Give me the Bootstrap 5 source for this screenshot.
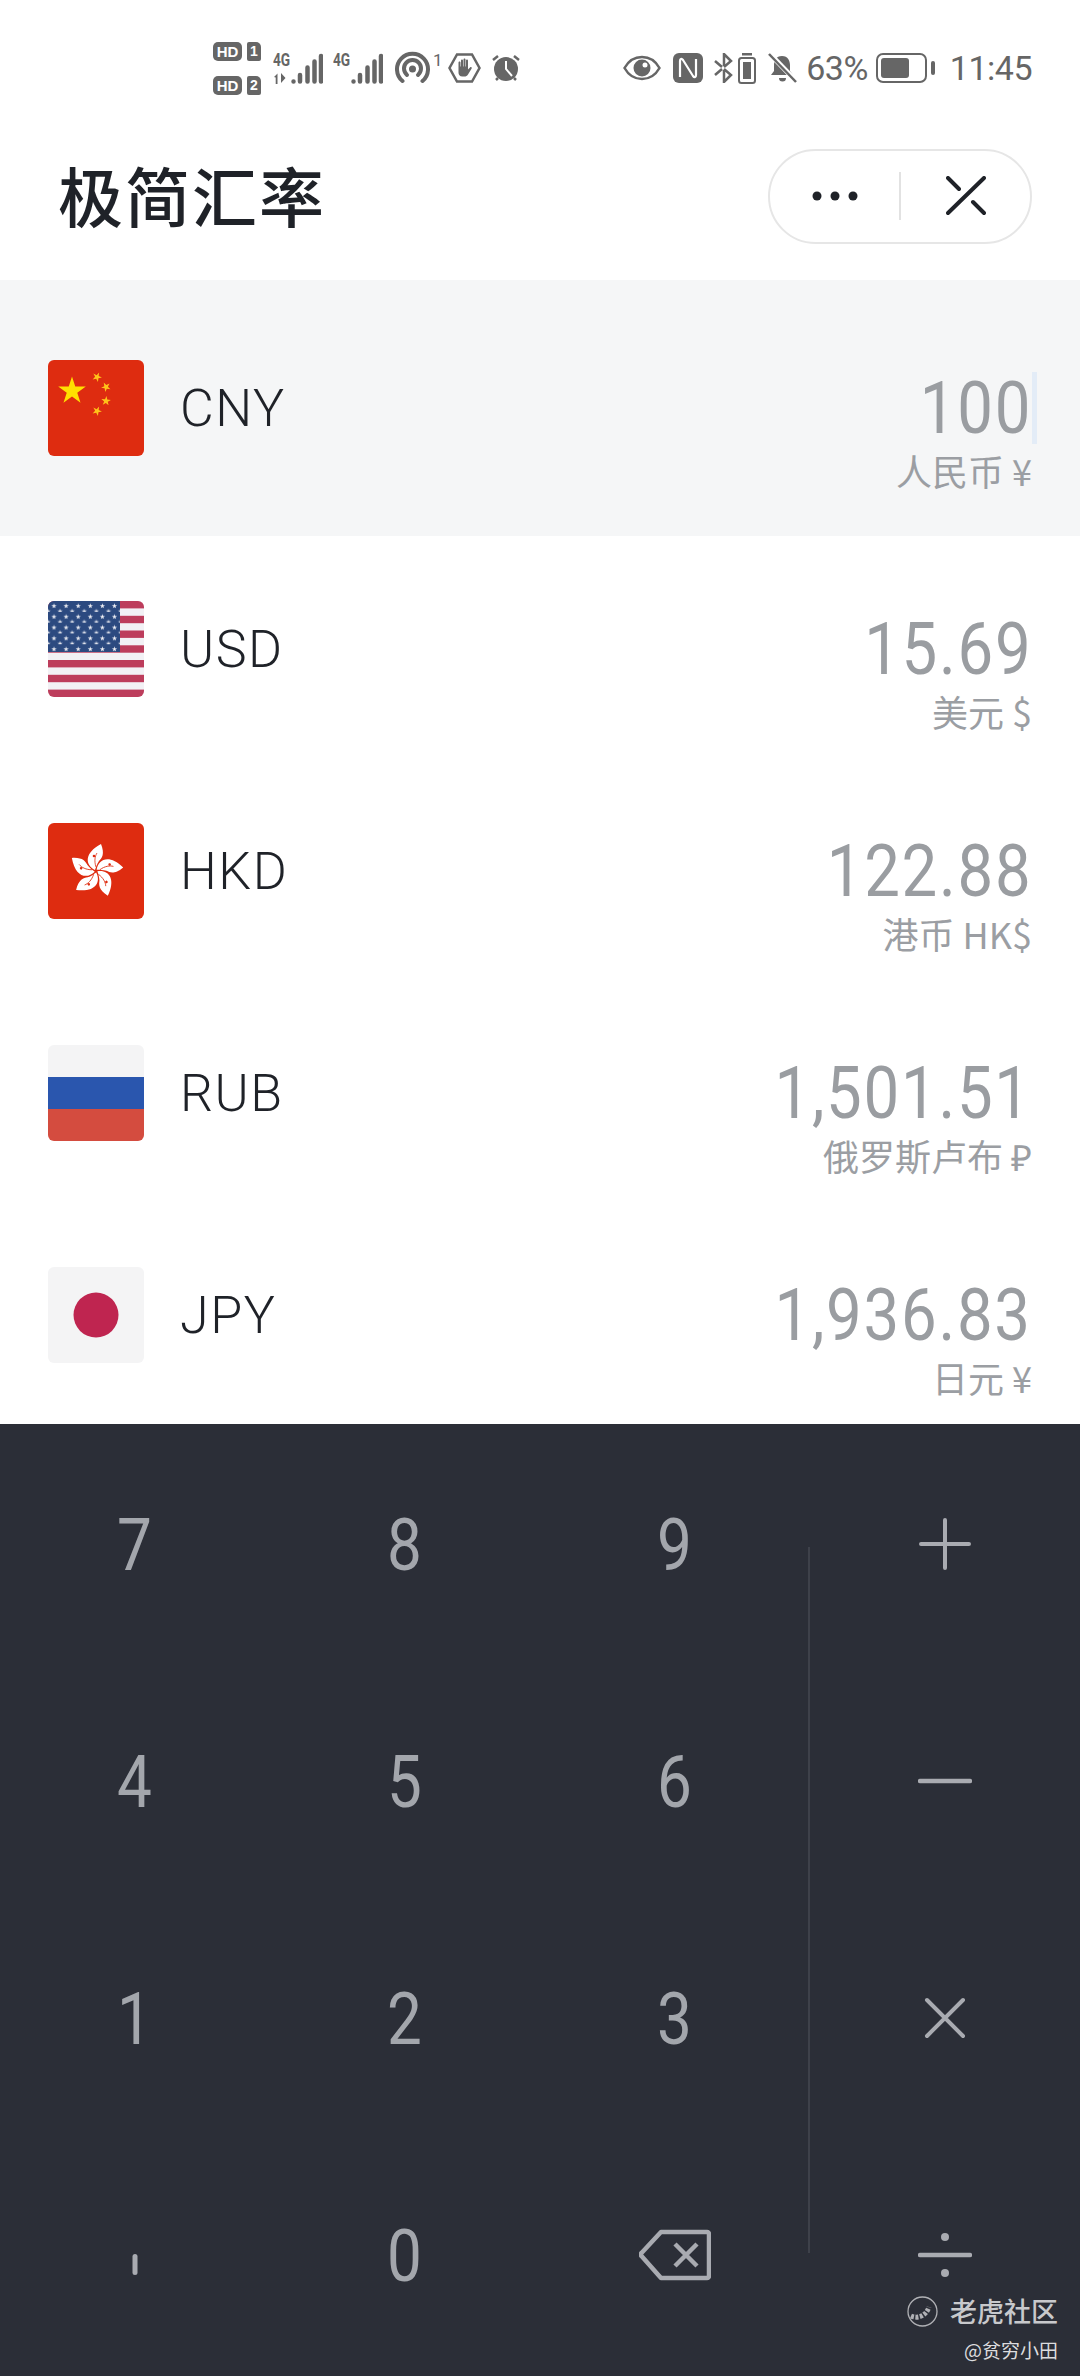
<!DOCTYPE html>
<html lang="zh-CN">
<head>
<meta charset="UTF-8">
<meta name="viewport" content="width=device-width, initial-scale=1.0">
<title>极简汇率</title>
<link href="https://cdn.jsdelivr.net/npm/bootstrap@5.3.0/dist/css/bootstrap.min.css" rel="stylesheet">
<style>
    html, body { margin: 0; background: #fff; }
    body {
        width: 1080px;
        height: 2376px;
        overflow: hidden;
        font-family: "Roboto", "Noto Sans CJK SC", sans-serif;
        position: relative;
    }
    svg { display: block; flex-shrink: 0; }

    /* status bar */
    .status-bar {
        height: 112px;
        padding: 24px 48px 0 213px;
        color: #666;
        font-size: 34px;
        line-height: 1;
    }
    .status-left > :nth-child(2) { margin-left: 12px; }
    .status-left > :nth-child(3) { margin-left: 10px; }
    .status-left > :nth-child(4) { margin-left: 12px; margin-top: -4px; }
    .status-left > :nth-child(5) { margin-left: 5px; }
    .status-left > :nth-child(6) { margin-left: 11px; }
    .status-right > :nth-child(2) { margin-left: 12px; }
    .status-right > :nth-child(3) { margin-left: 11px; }
    .status-right > :nth-child(4) { margin-left: 5px; }
    .status-right > :nth-child(5) { margin-left: 12px; }
    .status-right > :nth-child(6) { margin-left: 9px; }
    .status-right > :nth-child(7) { margin-left: 8px; }
    .status-right > :nth-child(8) { margin-left: 14px; }
    .status-text { font-weight: 400; letter-spacing: -.5px; }
    .hd-stack { width: 48px; gap: 15px; }
    .hd-line { gap: 5px; height: 19px; }
    .hd-tag, .sim-tag {
        background: #666;
        color: #fff;
        font-family: "Liberation Sans", sans-serif;
        font-weight: 700;
        font-size: 15px;
        line-height: 19px;
        text-align: center;
    }
    .hd-tag { width: 29px; border-radius: 5px; }
    .sim-tag { width: 14px; border-radius: 2px; border-top-right-radius: 5px; font-size: 14px; }
    .net-tag { width: 18px; height: 31px; }
    .net-text {
        font-weight: 700;
        font-size: 19px;
        line-height: 14px;
        transform: scaleX(.72);
        transform-origin: left;
        color: #666;
        margin-bottom: 6px;
    }

    /* title bar */
    .title-bar {
        height: 168px;
        padding: 0 48px 0 58px;
    }
    .page-title {
        font-family: "Noto Sans CJK SC", sans-serif;
        font-size: 65px;
        font-weight: 500;
        letter-spacing: 2px;
        color: #1f2228;
        margin: 0 0 4px;
        line-height: 1;
    }
    .capsule {
        width: 264px;
        height: 95px;
        border: 2px solid #e6e6e6;
        border-radius: 48px;
    }
    .capsule-btn { flex: 1 1 0; }
    .capsule-sep { width: 2px; height: 48px; background: #e2e2e2; }

    /* currency rows */
    .rate-list { height: 1144px; overflow: hidden; }
    .rate-row {
        height: 222px;
        padding: 0 48px;
    }
    .rate-row.is-active {
        height: 256px;
        background: #f5f6f7;
        margin-bottom: 2px;
    }
    .flag-box {
        width: 96px;
        height: 96px;
        border-radius: 6px;
        overflow: hidden;
        flex-shrink: 0;
    }
    .code-text {
        margin: 1px 0 0 36px;
        font-size: 52px;
        font-weight: 300;
        color: #1f2228;
        letter-spacing: 1.5px;
        line-height: 1;
    }
    .rate-value { padding-top: 52px; text-align: right; }
    .rate-num {
        font-size: 73px;
        line-height: 72px;
        letter-spacing: 2px;
        color: #9a9da1;
    }
    .num-glyphs {
        display: inline-block;
        transform: scaleX(.87);
        transform-origin: right;
    }
    .rate-name {
        font-family: "Noto Sans CJK SC", sans-serif;
        font-size: 36px;
        line-height: 52px;
        color: #9b9ea3;
    }
    .text-cursor {
        display: inline-block;
        width: 5px;
        height: 72px;
        margin-right: -5px;
        vertical-align: top;
        background: #e3ecf7;
    }

    /* keypad */
    .keypad {
        height: 952px;
        padding-top: 1px;
        background: #2b2e37;
        position: relative;
    }
    .key-col {
        height: 237px;
        color: #a3a6ac;
        font-size: 73px;
        line-height: 1;
    }
    .key-digit {
        display: inline-block;
        padding-top: 4px;
        transform: scaleX(.85);
    }
    .comma-mark { margin-top: 20px; }
    .keypad-line {
        position: absolute;
        left: 808px;
        top: 123px;
        width: 2px;
        height: 706px;
        background: #3e414a;
    }
    .watermark {
        position: absolute;
        right: 22px;
        bottom: 13px;
        text-align: right;
        font-family: "Noto Sans CJK SC", sans-serif;
    }
    .wm-main { font-size: 27px; line-height: 36px; font-weight: 500; color: #c8c9cc; }
    .wm-logo { margin-right: 12px; }
    .wm-sub { font-size: 19px; line-height: 26px; margin-top: 8px; color: #dcdcde; }
</style>
</head>
<body>
    <!-- status bar -->
    <div class="status-bar d-flex justify-content-between align-items-center">
        <div class="status-left d-flex align-items-center">
            <div class="hd-stack d-flex flex-column">
                <div class="hd-line d-flex"><span class="hd-tag">HD</span><span class="sim-tag">1</span></div>
                <div class="hd-line d-flex"><span class="hd-tag">HD</span><span class="sim-tag">2</span></div>
            </div>
            <div class="d-flex align-items-start">
                <div class="net-tag">
                    <div class="net-text">4G</div>
                    <svg width="16" height="11" viewBox="0 0 16 11"><path d="M1 4l3.500-3.500V11H2.700V4.500zM8 0l4.500 5L8 10z" fill="#666"/></svg>
                </div>
                <svg width="32" height="31" viewBox="0 0 32 31">
                    <path d="M2.500 28.500v0M9 22v6.500M16.500 14.500v14M23.500 8.500v20M30 3v25.500" fill="none" stroke="#666" stroke-width="4.500" stroke-linecap="round"/>
                </svg>
            </div>
            <div class="d-flex align-items-start">
                <div class="net-tag">
                    <div class="net-text">4G</div>
                </div>
                <svg width="32" height="31" viewBox="0 0 32 31">
                    <path d="M2.500 28.500v0M9 22v6.500M16.500 14.500v14M23.500 8.500v20M30 3v25.500" fill="none" stroke="#666" stroke-width="4.500" stroke-linecap="round"/>
                </svg>
            </div>
            <svg width="48" height="36" viewBox="0 -4 48 36">
                <g fill="none" stroke="#666" stroke-width="4" stroke-linecap="round">
                    <path d="M7.500 29A15.500 15.500 0 1 1 27.500 29"/>
                    <path d="M12 23A8.500 8.500 0 1 1 23 23"/>
                </g>
                <circle cx="17.500" cy="17" r="3.500" fill="#666"/>
                <text x="38" y="14" font-family="Roboto" font-size="17" fill="#666">1</text>
            </svg>
            <svg width="33" height="30" viewBox="0 0 33 30">
                <path d="M9 1.500h15l7.500 13.500-7.500 13.500h-15l-7.500-13.500z" fill="none" stroke="#666" stroke-width="2.500"/>
                <path d="M10.500 9.500c0-1.500 2-1.500 2 0v4h.500v-6c0-1.500 2-1.500 2 0v6h.500v-7c0-1.500 2-1.500 2 0v7h.500v-6c0-1.500 2-1.500 2 0v9l2-2c1-1 2.500 0 1.500 1.200l-3.500 5.800c-1 1.500-2 2-3.500 2h-2c-3 0-4-2-4-4z" fill="#666"/>
            </svg>
            <svg width="28" height="30" viewBox="0 0 28 30">
                <circle cx="14" cy="16" r="12" fill="#666"/>
                <path d="M14 8v8l6 7" fill="none" stroke="#fff" stroke-width="2"/>
                <path d="M1 7l5-4M27 7l-5-4M4 27l2-2M24 27l-2-2" stroke="#666" stroke-width="2.500" fill="none"/>
            </svg>
        </div>
        <div class="status-right d-flex align-items-center">
            <svg width="38" height="26" viewBox="0 0 38 26">
                <path d="M1.500 13C6 5 12 2 19 2s13 3 17.500 11C32 21 26 24 19 24S6 21 1.500 13z" fill="none" stroke="#666" stroke-width="2.500"/>
                <circle cx="19" cy="13" r="8.500" fill="#666"/>
                <circle cx="22" cy="10" r="2.500" fill="#fff"/>
            </svg>
            <svg width="30" height="30" viewBox="0 0 30 30">
                <rect width="30" height="30" rx="6" fill="#666"/>
                <path d="M7 24V8c0-2 1.500-3 3-1l10 16c1.500 2 3 1 3-1V6" fill="none" stroke="#fff" stroke-width="2.200"/>
            </svg>
            <svg width="19" height="30" viewBox="0 0 19 30">
                <path d="M1 8l7 6M10 16l7 6-7 7V17M10 13V1l7 7-7 6M8 16l-7 6" fill="none" stroke="#666" stroke-width="2.500"/>
            </svg>
            <svg width="18" height="31" viewBox="0 0 18 31">
                <rect x="4" y="0" width="10" height="2.500" fill="#666"/>
                <rect x="1" y="5" width="16" height="25" rx="2.500" fill="none" stroke="#666" stroke-width="2"/>
                <rect x="5" y="9" width="8" height="17" fill="#666"/>
            </svg>
            <svg width="29" height="30" viewBox="0 0 29 30">
                <path d="M14 3c-6 0-8 5-8 9v6l-3 4h22l-3-4v-6c0-4-2-9-8-9z" fill="#666"/>
                <path d="M11 25a3.500 3.500 0 0 0 7 0z" fill="#666"/>
                <path d="M2 1l26 27" stroke="#fff" stroke-width="5"/>
                <path d="M1 1l27 28" stroke="#666" stroke-width="2.500"/>
            </svg>
            <span class="status-text">63%</span>
            <svg width="60" height="30" viewBox="0 0 60 30">
                <rect x="1" y="1" width="49" height="28" rx="6" fill="none" stroke="#666" stroke-width="2"/>
                <rect x="5" y="5" width="28" height="20" rx="3" fill="#666"/>
                <rect x="55" y="8" width="4" height="14" rx="2" fill="#666"/>
            </svg>
            <span class="status-text">11:45</span>
        </div>
    </div>

    <!-- title bar -->
    <div class="title-bar d-flex justify-content-between align-items-center">
        <h1 class="page-title">极简汇率</h1>
        <div class="capsule d-flex align-items-center">
            <div class="capsule-btn d-flex justify-content-center">
                <svg width="46" height="12" viewBox="0 0 46 12">
                    <circle cx="5" cy="6" r="4.500" fill="#1f2228"/><circle cx="23" cy="6" r="4.500" fill="#1f2228"/><circle cx="41" cy="6" r="4.500" fill="#1f2228"/>
                </svg>
            </div>
            <div class="capsule-sep"></div>
            <div class="capsule-btn d-flex justify-content-center">
                <svg width="40" height="40" viewBox="0 0 40 40">
                    <path d="M2 37L38 2M2 2l11 11M27 26l11 11" fill="none" stroke="#1f2228" stroke-width="4" stroke-linecap="round"/>
                </svg>
            </div>
        </div>
    </div>

    <!-- currency list -->
    <div class="rate-list">
        <div class="rate-row is-active d-flex align-items-center">
            <div class="flag-box">
                <svg width="96" height="96" viewBox="0 0 96 96">
                    <defs><polygon id="star5" points="0,-1 .2245,-.309 .951,-.309 .363,.118 .588,.809 0,.382 -.588,.809 -.363,.118 -.951,-.309 -.2245,-.309"/></defs>
                    <rect width="96" height="96" fill="#de2c10"/>
                    <use href="#star5" transform="translate(24 31) scale(14.500)" fill="#ffe000"/>
                    <use href="#star5" transform="translate(49 17) rotate(25) scale(5)" fill="#ffc21a"/>
                    <use href="#star5" transform="translate(58 27) rotate(45) scale(5)" fill="#ffc21a"/>
                    <use href="#star5" transform="translate(58 41) rotate(5) scale(5)" fill="#ffc21a"/>
                    <use href="#star5" transform="translate(49 51) rotate(25) scale(5)" fill="#ffc21a"/>
                </svg>
            </div>
            <div class="code-text">CNY</div>
            <div class="rate-value ms-auto">
                <div class="rate-num"><span class="num-glyphs">100</span><span class="text-cursor"></span></div>
                <div class="rate-name">人民币 ¥</div>
            </div>
        </div>

        <div class="rate-row d-flex align-items-center">
            <div class="flag-box">
                <svg width="96" height="96" viewBox="0 0 96 96">
                    <defs>
                        <pattern id="usStars" x="0" y="0" width="12.100" height="10.800" patternUnits="userSpaceOnUse">
                            <use href="#star5" transform="translate(6 5) scale(2.700)" fill="#f2f2f6"/>
                            <use href="#star5" transform="translate(12.100 10.400) scale(2.700)" fill="#f2f2f6"/>
                            <use href="#star5" transform="translate(0 10.400) scale(2.700)" fill="#f2f2f6"/>
                        </pattern>
                    </defs>
                    <rect width="96" height="96" fill="#f2f1f5"/>
                    <g fill="#bd3d5c">
                        <rect y="0" width="96" height="7.400"/><rect y="14.800" width="96" height="7.400"/>
                        <rect y="29.500" width="96" height="7.400"/><rect y="44.300" width="96" height="7.400"/>
                        <rect y="59" width="96" height="7.400"/><rect y="73.800" width="96" height="7.400"/>
                        <rect y="88.600" width="96" height="7.400"/>
                    </g>
                    <rect width="72" height="51" fill="#2c4a80"/>
                    <rect width="72" height="51" fill="url(#usStars)"/>
                </svg>
            </div>
            <div class="code-text">USD</div>
            <div class="rate-value ms-auto">
                <div class="rate-num"><span class="num-glyphs">15.69</span></div>
                <div class="rate-name">美元 $</div>
            </div>
        </div>

        <div class="rate-row d-flex align-items-center">
            <div class="flag-box">
                <svg width="96" height="96" viewBox="0 0 96 96">
                    <defs>
                        <g id="hkPetal">
                            <path d="M47 47C37 42 36 30 53 21C57 31 54 35 51 38C49 41 48 44 47 47Z" fill="#fff"/>
                            <path d="M48 44C46 38 47 33 49 30" fill="none" stroke="#de2c10" stroke-width=".8"/>
                            <circle cx="46" cy="33" r="1.300" fill="#de2c10"/>
                        </g>
                    </defs>
                    <rect width="96" height="96" fill="#de2c10"/>
                    <use href="#hkPetal"/>
                    <use href="#hkPetal" transform="rotate(72 48 48)"/>
                    <use href="#hkPetal" transform="rotate(144 48 48)"/>
                    <use href="#hkPetal" transform="rotate(216 48 48)"/>
                    <use href="#hkPetal" transform="rotate(288 48 48)"/>
                </svg>
            </div>
            <div class="code-text">HKD</div>
            <div class="rate-value ms-auto">
                <div class="rate-num"><span class="num-glyphs">122.88</span></div>
                <div class="rate-name">港币 HK$</div>
            </div>
        </div>

        <div class="rate-row d-flex align-items-center">
            <div class="flag-box">
                <svg width="96" height="96" viewBox="0 0 96 96">
                    <rect width="96" height="32" fill="#f4f4f5"/>
                    <rect y="32" width="96" height="32" fill="#2a56ae"/>
                    <rect y="64" width="96" height="32" fill="#d44c3f"/>
                </svg>
            </div>
            <div class="code-text">RUB</div>
            <div class="rate-value ms-auto">
                <div class="rate-num"><span class="num-glyphs">1,501.51</span></div>
                <div class="rate-name">俄罗斯卢布 ₽</div>
            </div>
        </div>

        <div class="rate-row d-flex align-items-center">
            <div class="flag-box">
                <svg width="96" height="96" viewBox="0 0 96 96">
                    <rect width="96" height="96" fill="#f4f4f5"/>
                    <circle cx="48" cy="48" r="22.500" fill="#bf2550"/>
                </svg>
            </div>
            <div class="code-text">JPY</div>
            <div class="rate-value ms-auto">
                <div class="rate-num"><span class="num-glyphs">1,936.83</span></div>
                <div class="rate-name">日元 ¥</div>
            </div>
        </div>
    </div>

    <!-- keypad -->
    <div class="keypad">
        <div class="row g-0">
            <div class="col-3 key-col d-flex align-items-center justify-content-center"><span class="key-digit">7</span></div>
            <div class="col-3 key-col d-flex align-items-center justify-content-center"><span class="key-digit">8</span></div>
            <div class="col-3 key-col d-flex align-items-center justify-content-center"><span class="key-digit">9</span></div>
            <div class="col-3 key-col d-flex align-items-center justify-content-center">
                <svg width="52" height="52" viewBox="0 0 52 52"><path d="M26 2v48M2 26h48" stroke="#a9abb1" stroke-width="4" stroke-linecap="round"/></svg>
            </div>
            <div class="col-3 key-col d-flex align-items-center justify-content-center"><span class="key-digit">4</span></div>
            <div class="col-3 key-col d-flex align-items-center justify-content-center"><span class="key-digit">5</span></div>
            <div class="col-3 key-col d-flex align-items-center justify-content-center"><span class="key-digit">6</span></div>
            <div class="col-3 key-col d-flex align-items-center justify-content-center">
                <svg width="54" height="6" viewBox="0 0 54 6"><path d="M2 3h50" stroke="#a9abb1" stroke-width="4.500" stroke-linecap="round"/></svg>
            </div>
            <div class="col-3 key-col d-flex align-items-center justify-content-center"><span class="key-digit">1</span></div>
            <div class="col-3 key-col d-flex align-items-center justify-content-center"><span class="key-digit">2</span></div>
            <div class="col-3 key-col d-flex align-items-center justify-content-center"><span class="key-digit">3</span></div>
            <div class="col-3 key-col d-flex align-items-center justify-content-center">
                <svg width="44" height="44" viewBox="0 0 44 44"><path d="M4 4l36 36M40 4L4 40" stroke="#a9abb1" stroke-width="4" stroke-linecap="round"/></svg>
            </div>
            <div class="col-3 key-col d-flex align-items-center justify-content-center">
                <svg class="comma-mark" width="6" height="21" viewBox="0 0 6 21"><path d="M3 2.500v16" stroke="#a9abb1" stroke-width="5" stroke-linecap="round"/></svg>
            </div>
            <div class="col-3 key-col d-flex align-items-center justify-content-center"><span class="key-digit">0</span></div>
            <div class="col-3 key-col d-flex align-items-center justify-content-center">
                <svg width="72" height="52" viewBox="0 0 72 52"><path d="M22 3h46a2 2 0 0 1 2 2v42a2 2 0 0 1-2 2H22L2.500 27a2 2 0 0 1 0-3z" fill="none" stroke="#a9abb1" stroke-width="4.500" stroke-linejoin="round"/><path d="M36 15l22 22M58 15L36 37" stroke="#a9abb1" stroke-width="4.500"/></svg>
            </div>
            <div class="col-3 key-col d-flex align-items-center justify-content-center">
                <svg width="54" height="46" viewBox="0 0 54 46"><path d="M2 23h50" stroke="#a9abb1" stroke-width="4.500" stroke-linecap="round"/><circle cx="27" cy="5" r="4" fill="#a9abb1"/><circle cx="27" cy="41" r="4" fill="#a9abb1"/></svg>
            </div>
        </div>
        <div class="keypad-line"></div>
        <div class="watermark">
            <div class="wm-main d-flex align-items-center justify-content-end">
                <svg class="wm-logo" width="31" height="31" viewBox="0 0 31 31">
                    <circle cx="15.500" cy="15.500" r="14.500" fill="none" stroke="#b0b1b5" stroke-width="1.300"/>
                    <path d="M4 20c7 3 15 0 18-9" fill="none" stroke="#b0b1b5" stroke-width="5" stroke-dasharray="3 1.500"/>
                </svg>
                老虎社区
            </div>
            <div class="wm-sub">@贫穷小田</div>
        </div>
    </div>
    <script src="https://cdn.jsdelivr.net/npm/bootstrap@5.3.0/dist/js/bootstrap.bundle.min.js"></script>
</body>
</html>
